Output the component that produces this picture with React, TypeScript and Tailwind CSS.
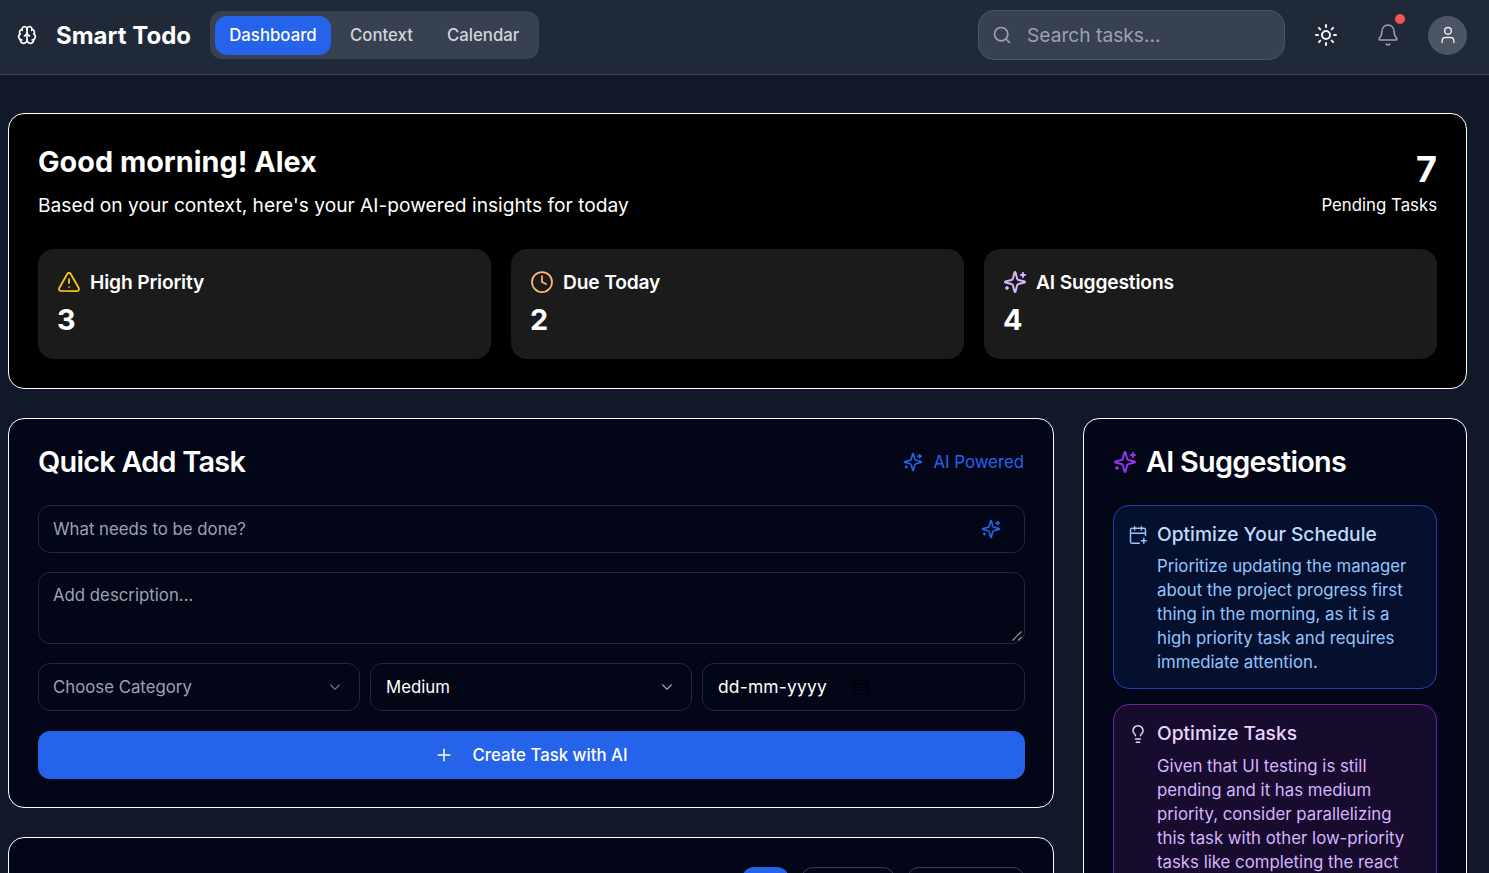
import React from "react";
import { Bell, Brain, CalendarPlus, ChevronDown, Clock, Lightbulb, Plus, Search, Sun, TriangleAlert, User } from "lucide-react";

function Spark({ className }: { className: string }) {
  return (
    <svg className={className} viewBox="0 0 24 24" fill="none" stroke="currentColor" strokeWidth={2} strokeLinecap="round" strokeLinejoin="round">
      <path d="M9.937 15.5A2 2 0 0 0 8.5 14.063l-6.135-1.582a.5.5 0 0 1 0-.962L8.5 9.936A2 2 0 0 0 9.937 8.5l1.582-6.135a.5.5 0 0 1 .963 0L14.063 8.5A2 2 0 0 0 15.5 9.937l6.135 1.581a.5.5 0 0 1 0 .964L15.5 14.063a2 2 0 0 0-1.437 1.437l-1.582 6.135a.5.5 0 0 1-.963 0z" />
      <path d="M20 3v4M22 5h-4M4 17v2M5 18H3" />
    </svg>
  );
}

function Stat({ icon, label, value }: { icon: React.ReactNode; label: string; value: string }) {
  return (
    <div className="h-[110px] rounded-2xl bg-[#1b1b1b] pt-[19px] pr-5 pl-[19px]">
      <div className="flex h-[28px] items-center gap-[9px]">
        {icon}
        <span className="text-[19.2px] font-semibold leading-7 tracking-[-0.15px] text-white">{label}</span>
      </div>
      <div className="mt-[6px] text-[28.8px] font-bold leading-9 text-white">{value}</div>
    </div>
  );
}

function Suggestion({ icon, title, body, box, head, text, gap }: { icon: React.ReactNode; title: string; body: string[]; box: string; head: string; text: string; gap: string }) {
  return (
    <div className={`rounded-2xl border pt-[14px] pr-[15px] pb-[14px] pl-[14px] ${box}`}>
      <div className="flex gap-[9px]">
        <div className="w-5 shrink-0 pt-[5px]">{icon}</div>
        <div className="min-w-0">
          <div className={`text-[19.2px] font-medium leading-7 ${head}`}>{title}</div>
          <div className={`text-[16.8px] leading-6 ${gap} ${text}`}>
            {body.map((l) => (
              <div key={l} className="whitespace-nowrap">{l}</div>
            ))}
          </div>
        </div>
      </div>
    </div>
  );
}

export default function App() {
  return (
    <div className="h-screen overflow-hidden bg-[#111827] font-['Inter',sans-serif] text-white">
      <header className="flex h-[75px] items-center justify-between border-b border-[#374151] bg-[#1f2937] pr-[22px] pb-[4px] pl-[17px]">
        <div className="flex items-center">
          <Brain className="h-[20px] w-[20px] text-white" strokeWidth={2} />
          <span className="mt-[2px] ml-[19px] text-[24px] font-bold leading-8">Smart Todo</span>
          <nav className="ml-[19px] flex h-[48px] items-center rounded-xl bg-[#374151] pr-[20px] pl-[5px]">
            <span className="flex h-[39px] w-[116px] items-center justify-center rounded-xl bg-[#2563eb] pt-[1px] text-[16.8px] font-medium">Dashboard</span>
            <span className="mt-[1px] ml-[19px] text-[16.8px] font-medium text-[#d1d5db]">Context</span>
            <span className="mt-[1px] ml-[34px] text-[16.8px] font-medium text-[#d1d5db]">Calendar</span>
          </nav>
        </div>
        <div className="flex items-center">
          <div className="flex h-[50px] w-[307px] items-center rounded-2xl border border-[#4b5563] bg-[#374151] pl-[13px]">
            <Search className="h-5 w-5 text-[#9ca3af]" strokeWidth={2} />
            <span className="ml-[15px] text-[19.2px] text-[#9ca3af]">Search tasks...</span>
          </div>
          <Sun className="ml-[29px] h-6 w-6 text-[#f3f4f6]" strokeWidth={2} />
          <div className="relative ml-[38px] h-6 w-6">
            <Bell className="h-6 w-6 text-[#9ca3af]" strokeWidth={1.5} />
            <span className="absolute -top-[9px] left-[19px] h-[10px] w-[10px] rounded-full bg-[#f25555]" />
          </div>
          <div className="ml-[28px] flex h-[39px] w-[39px] items-center justify-center rounded-full bg-[#4b5563]">
            <User className="h-5 w-5 text-[#e5e7eb]" strokeWidth={1.75} />
          </div>
        </div>
      </header>

      <main className="pt-[38px] pr-[22px] pl-2">
        <section className="h-[276px] rounded-2xl border border-white bg-black px-[29px] pt-[30px]">
          <div className="flex justify-between">
            <div>
              <h1 className="text-[28.8px] font-bold leading-9">Good morning! Alex</h1>
              <p className="mt-[11px] text-[19.2px] leading-7">Based on your context, here's your AI-powered insights for today</p>
            </div>
            <div className="pt-[5px] text-right">
              <div className="text-[36px] font-bold leading-10">7</div>
              <div className="mt-[4px] text-[16.8px] leading-6">Pending Tasks</div>
            </div>
          </div>
          <div className="mt-[30px] grid grid-cols-3 gap-5">
            <Stat icon={<TriangleAlert className="h-6 w-6 text-[#facc15]" strokeWidth={1.75} />} label="High Priority" value="3" />
            <Stat icon={<Clock className="h-6 w-6 text-[#fdba74]" strokeWidth={1.75} />} label="Due Today" value="2" />
            <Stat icon={<Spark className="h-6 w-6 text-[#d8b4fe]" />} label="AI Suggestions" value="4" />
          </div>
        </section>

        <div className="mt-[29px] grid grid-cols-[1046px_384px] gap-[29px]">
          <div className="flex flex-col gap-[29px]">
            <section className="h-[390px] rounded-2xl border border-white bg-[#020617] pt-[25px] pr-[28px] pl-[29px]">
              <div className="flex items-center justify-between">
                <h2 className="text-[28.8px] font-semibold leading-9 tracking-[-0.72px]">Quick Add Task</h2>
                <div className="flex items-center gap-[10px] pr-[1px] text-[#2563eb]">
                  <Spark className="h-5 w-5" />
                  <span className="text-[16.8px] leading-6">AI Powered</span>
                </div>
              </div>
              <div className="mt-[25px] flex h-[48px] items-center justify-between rounded-xl border border-[#1f2937] pr-[23px] pl-[14px]">
                <span className="text-[16.8px] leading-6 text-[#9ca3af]">What needs to be done?</span>
                <Spark className="h-5 w-5 text-[#2563eb]" />
              </div>
              <div className="relative mt-[19px] h-[72px] rounded-xl border border-[#1f2937] pt-[10px] pl-[14px]">
                <span className="text-[16.8px] leading-6 text-[#9ca3af]">Add description...</span>
                <svg className="absolute right-[1px] bottom-[1px] h-[12px] w-[12px]" viewBox="0 0 12 12" fill="none" stroke="#9a9a9a" strokeWidth="1.2">
                  <path d="M1.5 10.5 10.5 1.5M7 10.5l3.5-3.5" />
                </svg>
              </div>
              <div className="mt-[19px] grid grid-cols-[322px_322px_323px] gap-[10px]">
                <div className="flex h-[48px] items-center justify-between rounded-xl border border-[#1f2937] pr-[15px] pl-[14px]">
                  <span className="text-[16.8px] leading-6 text-[#9ca3af]">Choose Category</span>
                  <ChevronDown className="h-[18px] w-[18px] text-[#6b7280]" strokeWidth={1.5} />
                </div>
                <div className="flex h-[48px] items-center justify-between rounded-xl border border-[#1f2937] pr-[15px] pl-[15px]">
                  <span className="text-[16.8px] leading-6 text-white">Medium</span>
                  <ChevronDown className="h-[18px] w-[18px] text-[#9ca3af]" strokeWidth={1.5} />
                </div>
                <div className="flex h-[48px] items-center rounded-xl border border-[#1f2937] pl-[15px]">
                  <span className="w-[135px] text-[17.4px] tracking-[0.2px] text-white">dd-mm-yyyy</span>
                  <svg className="h-[16px] w-[16px]" viewBox="0 0 16 16" fill="none" stroke="#000" strokeWidth="1.2">
                    <rect x="1" y="1.5" width="14" height="13.5" rx="2" />
                    <path d="M1 5h14M4.5 8h1.5M7.5 8H9M10.5 8H12M4.5 11h1.5M7.5 11H9" />
                  </svg>
                </div>
              </div>
              <button className="mt-[20px] flex h-[48px] w-full items-center justify-center rounded-xl bg-[#2563eb] pr-[2px]">
                <Plus className="h-5 w-5 text-white" strokeWidth={1.75} />
                <span className="ml-[19px] text-[16.8px] font-medium leading-6">Create Task with AI</span>
              </button>
            </section>

            <section className="h-[300px] rounded-2xl border border-white bg-[#020617] pt-[29px] pr-[28px] pl-[29px]">
              <div className="flex justify-end gap-3">
                <span className="h-[40px] w-[47px] rounded-xl bg-[#2563eb]" />
                <span className="h-[40px] w-[94px] rounded-xl border border-[#374151]" />
                <span className="h-[40px] w-[118px] rounded-xl border border-[#374151]" />
              </div>
            </section>
          </div>

          <aside className="h-[700px] rounded-2xl border border-white bg-[#020617] px-[29px] pt-[25px]">
            <div className="flex items-center gap-[9px]">
              <Spark className="h-6 w-6 text-[#9333ea]" />
              <h2 className="text-[28.8px] font-semibold leading-9 tracking-[-0.72px]">AI Suggestions</h2>
            </div>
            <div className="mt-[25px] flex flex-col gap-[15px]">
              <Suggestion
                icon={<CalendarPlus className="h-5 w-5 text-[#93c5fd]" strokeWidth={1.75} />}
                title="Optimize Your Schedule"
                body={["Prioritize updating the manager", "about the project progress first", "thing in the morning, as it is a", "high priority task and requires", "immediate attention."]}
                box="border-[#1e40af] bg-[#05102f]"
                head="text-[#bfdbfe]"
                text="text-[#93c5fd]"
                gap="mt-[6px]"
              />
              <Suggestion
                icon={<Lightbulb className="h-5 w-5 text-[#e9d5ff]" strokeWidth={1.75} />}
                title="Optimize Tasks"
                body={["Given that UI testing is still", "pending and it has medium", "priority, consider parallelizing", "this task with other low-priority", "tasks like completing the react"]}
                box="border-[#6b21a8] bg-[#170b2e]"
                head="text-[#e9d5ff]"
                text="text-[#d8b4fe]"
                gap="mt-[7px]"
              />
            </div>
          </aside>
        </div>
      </main>
    </div>
  );
}
